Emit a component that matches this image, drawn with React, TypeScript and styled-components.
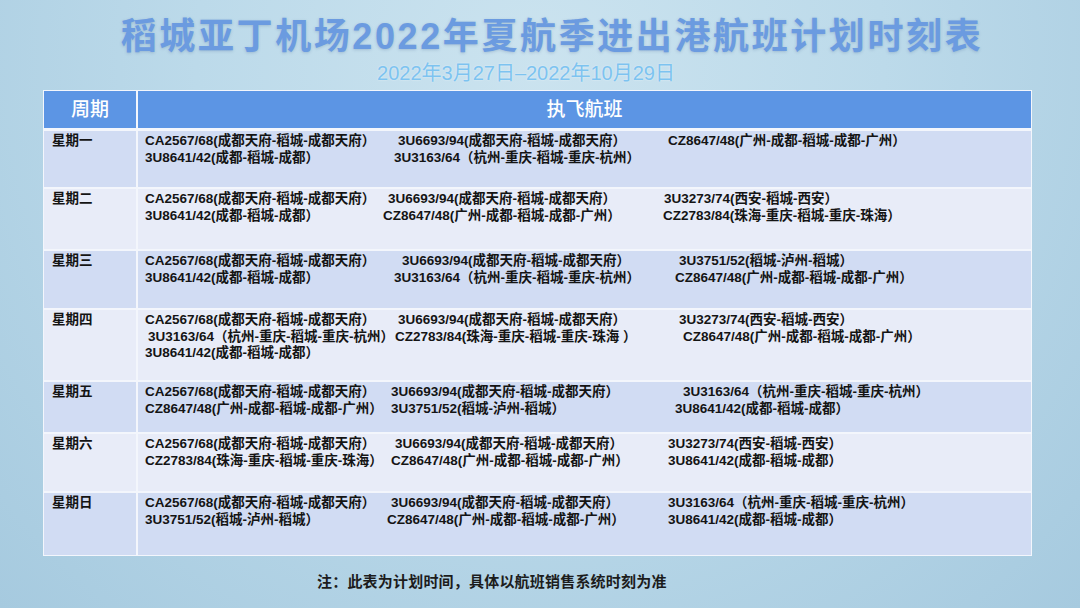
import styled, { createGlobalStyle } from 'styled-components';

// One line of a day's schedule: flights start at fixed offsets (px) from the cell's text edge
interface Line {
  at: number[];
  flights: string[];
}

interface Day {
  day: string;
  height: number;
  lines: Line[];
}

const CA = 'CA2567/68(成都天府-稻城-成都天府）';
const U6693 = '3U6693/94(成都天府-稻城-成都天府）';
const U8641 = '3U8641/42(成都-稻城-成都）';
const U3163 = '3U3163/64（杭州-重庆-稻城-重庆-杭州）';
const CZ8647 = 'CZ8647/48(广州-成都-稻城-成都-广州）';
const U3273 = '3U3273/74(西安-稻城-西安）';
const CZ2783 = 'CZ2783/84(珠海-重庆-稻城-重庆-珠海）';
const U3751 = '3U3751/52(稻城-泸州-稻城）';

const schedule: Day[] = [
  {
    day: '星期一',
    height: 56,
    lines: [
      { at: [0, 253, 523], flights: [CA, U6693, CZ8647] },
      { at: [0, 249], flights: [U8641, U3163] },
    ],
  },
  {
    day: '星期二',
    height: 60,
    lines: [
      { at: [0, 243, 519], flights: [CA, U6693, U3273] },
      { at: [0, 238, 518], flights: [U8641, CZ8647, CZ2783] },
    ],
  },
  {
    day: '星期三',
    height: 57,
    lines: [
      { at: [0, 257, 534], flights: [CA, U6693, U3751] },
      { at: [0, 249, 530], flights: [U8641, U3163, CZ8647] },
    ],
  },
  {
    day: '星期四',
    height: 70,
    lines: [
      { at: [0, 253, 534], flights: [CA, U6693, U3273] },
      { at: [3, 250, 538], flights: [U3163, 'CZ2783/84(珠海-重庆-稻城-重庆-珠海 ）', CZ8647] },
      { at: [0], flights: [U8641] },
    ],
  },
  {
    day: '星期五',
    height: 50,
    lines: [
      { at: [0, 246, 538], flights: [CA, U6693, U3163] },
      { at: [0, 246, 530], flights: [CZ8647, U3751, U8641] },
    ],
  },
  {
    day: '星期六',
    height: 57,
    lines: [
      { at: [0, 250, 523], flights: [CA, U6693, U3273] },
      { at: [0, 246, 523], flights: [CZ2783, CZ8647, U8641] },
    ],
  },
  {
    day: '星期日',
    height: 62,
    lines: [
      { at: [0, 246, 523], flights: [CA, U6693, U3163] },
      { at: [0, 242, 523], flights: [U3751, CZ8647, U8641] },
    ],
  },
];

const GlobalStyle = createGlobalStyle`
  html, body {
    margin: 0;
    padding: 0;
  }
  body {
    font-family: "Liberation Sans", "Noto Sans CJK SC", sans-serif;
  }
`;

const Page = styled.div`
  width: 1080px;
  height: 608px;
  overflow: hidden;
  box-sizing: border-box;
  padding-top: 15px;
  background: radial-gradient(ellipse at 50% 10%, #cbe3ef 0%, #bcdaea 45%, #a6cadf 100%);
  display: flex;
  flex-direction: column;
`;

const Title = styled.h1`
  margin: 0;
  padding-left: 24px;
  text-align: center;
  font-family: "Liberation Sans", "Noto Sans CJK SC", sans-serif;
  font-size: 36px;
  line-height: 44px;
  font-weight: 700;
  letter-spacing: 2.6px;
  color: #6b9be0;
  text-shadow: 0 1px 3px rgba(60, 90, 140, 0.25);
`;

const Subtitle = styled.div`
  margin-top: 2px;
  padding-right: 28px;
  text-align: center;
  font-size: 20px;
  line-height: 24px;
  color: #7dc3f0;
  text-shadow: 0 0 2px rgba(255, 255, 255, 0.6);
`;

const Table = styled.div`
  margin: 5px 0 0 43px;
  width: 989px;
  box-sizing: border-box;
  padding: 1px;
  background: #f3f6fc;
  display: flex;
  flex-direction: column;
  gap: 2px;
`;

const Row = styled.div<{ $height: number; $tone: 'head' | 'dark' | 'light' }>`
  display: grid;
  grid-template-columns: 92px 1fr;
  column-gap: 2px;
  height: ${(p) => p.$height}px;
  margin-bottom: ${(p) => (p.$tone === 'head' ? 1 : 0)}px;
  & > div {
    background: ${(p) => (p.$tone === 'head' ? '#5c95e4' : p.$tone === 'dark' ? '#d1dcf3' : '#e8ecf8')};
  }
`;

const HeadCell = styled.div`
  display: flex;
  align-items: center;
  justify-content: center;
  padding-bottom: 4px;
  box-sizing: border-box;
  color: #ffffff;
  font-family: "Noto Sans CJK SC", sans-serif;
  font-size: 19px;
  font-weight: 500;
`;

const DayCell = styled.div`
  padding: 2px 0 0 8px;
  font-size: 13.5px;
  line-height: 16.5px;
  font-weight: 700;
  color: #141414;
`;

const FlightCell = styled.div`
  padding: 2px 0 0 7px;
  display: flex;
  flex-direction: column;
`;

const FlightLine = styled.div<{ $at: number[] }>`
  display: grid;
  grid-template-columns: ${(p) =>
    p.$at.map((x, i) => (i < p.$at.length - 1 ? `${p.$at[i + 1] - x}px` : 'auto')).join(' ')};
  padding-left: ${(p) => p.$at[0]}px;
  font-size: 13.5px;
  line-height: 16.5px;
  font-weight: 700;
  color: #141414;
  white-space: nowrap;
`;

const Flight = styled.span``;

const Note = styled.div`
  margin: 15px 0 0 317px;
  font-family: "Noto Sans CJK SC", sans-serif;
  font-size: 15px;
  line-height: 20px;
  font-weight: 700;
  letter-spacing: 0.2px;
  color: #1c1c1c;
`;

const App = () => {
  return (
    <Page>
      <GlobalStyle />
      <Title>稻城亚丁机场2022年夏航季进出港航班计划时刻表</Title>
      <Subtitle>2022年3月27日–2022年10月29日</Subtitle>
      <Table>
        <Row $height={37} $tone="head">
          <HeadCell>周期</HeadCell>
          <HeadCell>执飞航班</HeadCell>
        </Row>
        {schedule.map((d, i) => (
          <Row key={d.day} $height={d.height} $tone={i % 2 === 0 ? 'dark' : 'light'}>
            <DayCell>{d.day}</DayCell>
            <FlightCell>
              {d.lines.map((line, j) => (
                <FlightLine key={j} $at={line.at}>
                  {line.flights.map((f, k) => (
                    <Flight key={k}>{f}</Flight>
                  ))}
                </FlightLine>
              ))}
            </FlightCell>
          </Row>
        ))}
      </Table>
      <Note>注：此表为计划时间，具体以航班销售系统时刻为准</Note>
    </Page>
  );
};

export default App;
